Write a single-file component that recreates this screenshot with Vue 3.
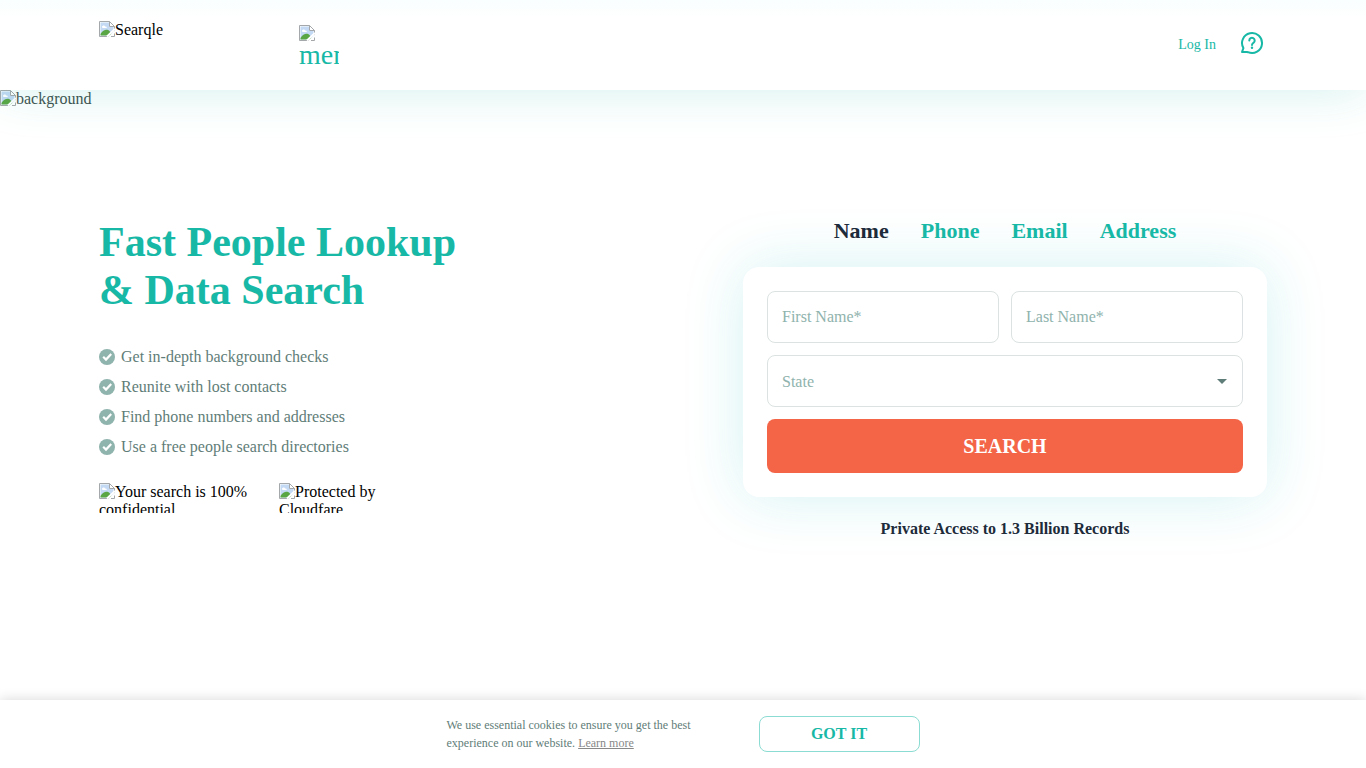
<script setup>
import { h, ref } from 'vue'

const tabs = ['Name', 'Phone', 'Email', 'Address']
const activeTab = ref('Name')
const benefits = [
  'Get in-depth background checks',
  'Reunite with lost contacts',
  'Find phone numbers and addresses',
  'Use a free people search directories'
]
const firstName = ref('')
const lastName = ref('')
const state = ref('')

const MissingIcon = () =>
  h('svg', { width: 16, height: 16, viewBox: '0 0 16 16', 'aria-hidden': 'true' }, [
    h('path', { d: 'M.5.5h10l5 5v10H.5z', fill: '#fff', stroke: '#a5a8ab' }),
    h('path', { d: 'M1.500 1.500h9v4.500h4v8.500h-13z', fill: '#c3d9f4' }),
    h('path', { d: 'M3 6c0-2 3-2 3-.5C8 5 8.500 7 7 7H3.500z', fill: '#fff' }),
    h('path', { d: 'M1.500 14.500v-1.500c3-5 7-5 9-3l3 4.500z', fill: '#5aa544' }),
    h('path', { d: 'M9 16l7-6.500v6.500z', fill: '#fff' }),
    h('path', { d: 'M8 15.500l8-7.500', stroke: '#fff', 'stroke-width': 2 }),
    h('path', { d: 'M10.500.5v5h5z', fill: '#fff', stroke: '#a5a8ab' }),
    h('path', { d: 'M12 15.500h3.500v-3', fill: 'none', stroke: '#a5a8ab' })
  ])
</script>

<template>
  <div class="page">
    <header class="header">
      <div class="container header-row">
        <a href="#" class="logo"><MissingIcon class="missing" />Searqle</a>
        <button type="button" class="menu"><MissingIcon class="missing" /><span>menu</span></button>
        <a href="#" class="login">Log In</a>
        <a href="#" class="help" aria-label="Help">
          <svg width="24" height="24" viewBox="0 0 24 24" fill="none" stroke="currentColor" stroke-width="2">
            <path d="M2 21L3.400 17.100A10 10 0 1 1 8 21.200L7 21Z" stroke-linejoin="round" />
            <path d="M9.300 9.500a2.700 2.700 0 1 1 4.300 2.200c-1.100.8-1.600 1.100-1.600 2.300" stroke-linecap="round" />
            <circle cx="12" cy="16.800" r="1.200" fill="currentColor" stroke="none" />
          </svg>
        </a>
      </div>
    </header>

    <main class="hero">
      <div class="background"><MissingIcon class="missing" />background</div>
      <div class="container hero-row">
        <section class="intro">
          <h1>Fast People Lookup<br />&amp; Data Search</h1>
          <ul class="benefits">
            <li v-for="item in benefits" :key="item">
              <svg width="16" height="16" viewBox="0 0 16 16" aria-hidden="true">
                <circle cx="8" cy="8" r="8" fill="#8fb3ad" />
                <path d="M4.200 7.800l2.800 2.800 5.200-5.600" fill="none" stroke="#fff" stroke-width="2.200" />
              </svg>
              {{ item }}
            </li>
          </ul>
          <div class="badges">
            <div class="badge"><MissingIcon class="missing" />Your search is 100% confidential</div>
            <div class="badge"><MissingIcon class="missing" />Protected by Cloudfare</div>
          </div>
        </section>

        <section class="search">
          <div class="tabs">
            <button
              v-for="tab in tabs"
              :key="tab"
              type="button"
              :class="{ active: tab === activeTab }"
              @click="activeTab = tab"
            >{{ tab }}</button>
          </div>
          <form class="card" @submit.prevent>
            <input v-model="firstName" type="text" placeholder="First Name*" aria-label="First Name" />
            <input v-model="lastName" type="text" placeholder="Last Name*" aria-label="Last Name" />
            <div class="select">
              <select v-model="state" aria-label="State">
                <option value="">State</option>
                <option>California</option>
                <option>New York</option>
                <option>Texas</option>
              </select>
              <svg width="10" height="5" viewBox="0 0 10 5" aria-hidden="true">
                <path d="M0 0h10L5 5z" fill="#5f7d78" />
              </svg>
            </div>
            <button type="submit">SEARCH</button>
          </form>
          <p class="note">Private Access to 1.3 Billion Records</p>
        </section>
      </div>
    </main>

    <footer class="cookies">
      <p>We use essential cookies to ensure you get the best experience on our website. <a href="#">Learn more</a></p>
      <button type="button">GOT IT</button>
    </footer>
  </div>
</template>

<style>
body {
  margin: 0;
  background: #fff;
}
</style>

<style scoped>
.page {
  display: flex;
  flex-direction: column;
  min-height: 100vh;
  overflow: hidden;
  font-family: "Liberation Serif", "Times New Roman", serif;
  font-size: 16px;
  line-height: 18px;
  color: #000;
}
.page * {
  box-sizing: border-box;
}
a {
  color: inherit;
  text-decoration: none;
}
button,
input,
select {
  margin: 0;
  font-family: inherit;
}
button {
  padding: 0;
  border: 0;
  background: none;
  cursor: pointer;
}
.missing {
  vertical-align: -2px;
}
.container {
  width: 100%;
  max-width: 1168px;
  margin: 0 auto;
}
.header {
  position: relative;
  z-index: 1;
  background: linear-gradient(#f9fefe, #fff 18px);
  box-shadow: 0 0 50px rgba(23, 184, 166, 0.2);
}
.header-row {
  display: flex;
  align-items: flex-start;
  height: 90px;
}
.logo {
  width: 160px;
  margin-top: 21px;
}
.menu {
  width: 40px;
  height: 40px;
  margin: 25px auto 0 40px;
  overflow: hidden;
  text-align: left;
  color: #17b8a6;
  font-size: 28px;
  line-height: 28px;
}
.menu .missing,
.menu span {
  display: block;
}
.login {
  margin: 36px 24px 0 0;
  color: #17b8a6;
  font-size: 14px;
}
.help {
  display: block;
  height: 24px;
  margin: 31px 3px 0 0;
  color: #17b8a6;
}
.help svg {
  display: block;
}
.hero {
  flex: 1;
}
.background {
  color: #3f4f4d;
}
.hero-row {
  display: flex;
  justify-content: space-between;
  padding-top: 110px;
}
h1 {
  margin: 0 0 28px;
  color: #17b8a6;
  font-size: 42px;
  line-height: 48px;
}
.benefits {
  margin: 0;
  padding: 0;
  list-style: none;
  color: #5f7d78;
}
.benefits li {
  display: flex;
  align-items: center;
  gap: 6px;
  height: 30px;
}
.badges {
  display: flex;
  gap: 30px;
  margin-top: 21px;
}
.badge {
  width: 150px;
  height: 30px;
  overflow: hidden;
}
.search {
  width: 524px;
}
.tabs {
  display: flex;
  justify-content: center;
  gap: 32px;
}
.tabs button {
  color: #17b8a6;
  font-size: 22px;
  font-weight: 700;
  line-height: 26px;
}
.tabs .active {
  color: #1d2b3a;
}
.card {
  display: grid;
  grid-template-columns: 1fr 1fr;
  gap: 12px;
  margin-top: 23px;
  padding: 24px;
  border-radius: 16px;
  background: #fff;
  box-shadow: 0 0 60px rgba(23, 184, 190, 0.18);
}
.card input,
.card select {
  width: 100%;
  height: 52px;
  padding: 0 14px;
  border: 1px solid #dce2e2;
  border-radius: 8px;
  background: #fff;
  color: #8fb3ad;
  font-size: 16px;
}
.card input::placeholder {
  color: #8fb3ad;
  opacity: 1;
}
.select {
  position: relative;
  grid-column: span 2;
  height: 52px;
}
.card select {
  appearance: none;
}
.select svg {
  position: absolute;
  top: 24px;
  right: 16px;
  pointer-events: none;
}
.card button {
  grid-column: span 2;
  height: 54px;
  border-radius: 8px;
  background: #f46548;
  color: #fff;
  font-size: 20px;
  font-weight: 700;
}
.note {
  margin: 23px 0 0;
  color: #1d2b3a;
  font-weight: 700;
  text-align: center;
}
.cookies {
  position: relative;
  display: flex;
  align-items: center;
  justify-content: center;
  gap: 64px;
  height: 68px;
  background: #fff;
  box-shadow: 0 0 12px rgba(0, 0, 0, 0.16);
}
.cookies p {
  width: 248px;
  margin: 0;
  color: #5f7d78;
  font-size: 12px;
}
.cookies a {
  color: #888;
  text-decoration: underline;
}
.cookies button {
  width: 161px;
  height: 36px;
  border: 1px solid #8bdcd2;
  border-radius: 8px;
  color: #17b8a6;
  font-size: 16px;
  font-weight: 700;
}
</style>
